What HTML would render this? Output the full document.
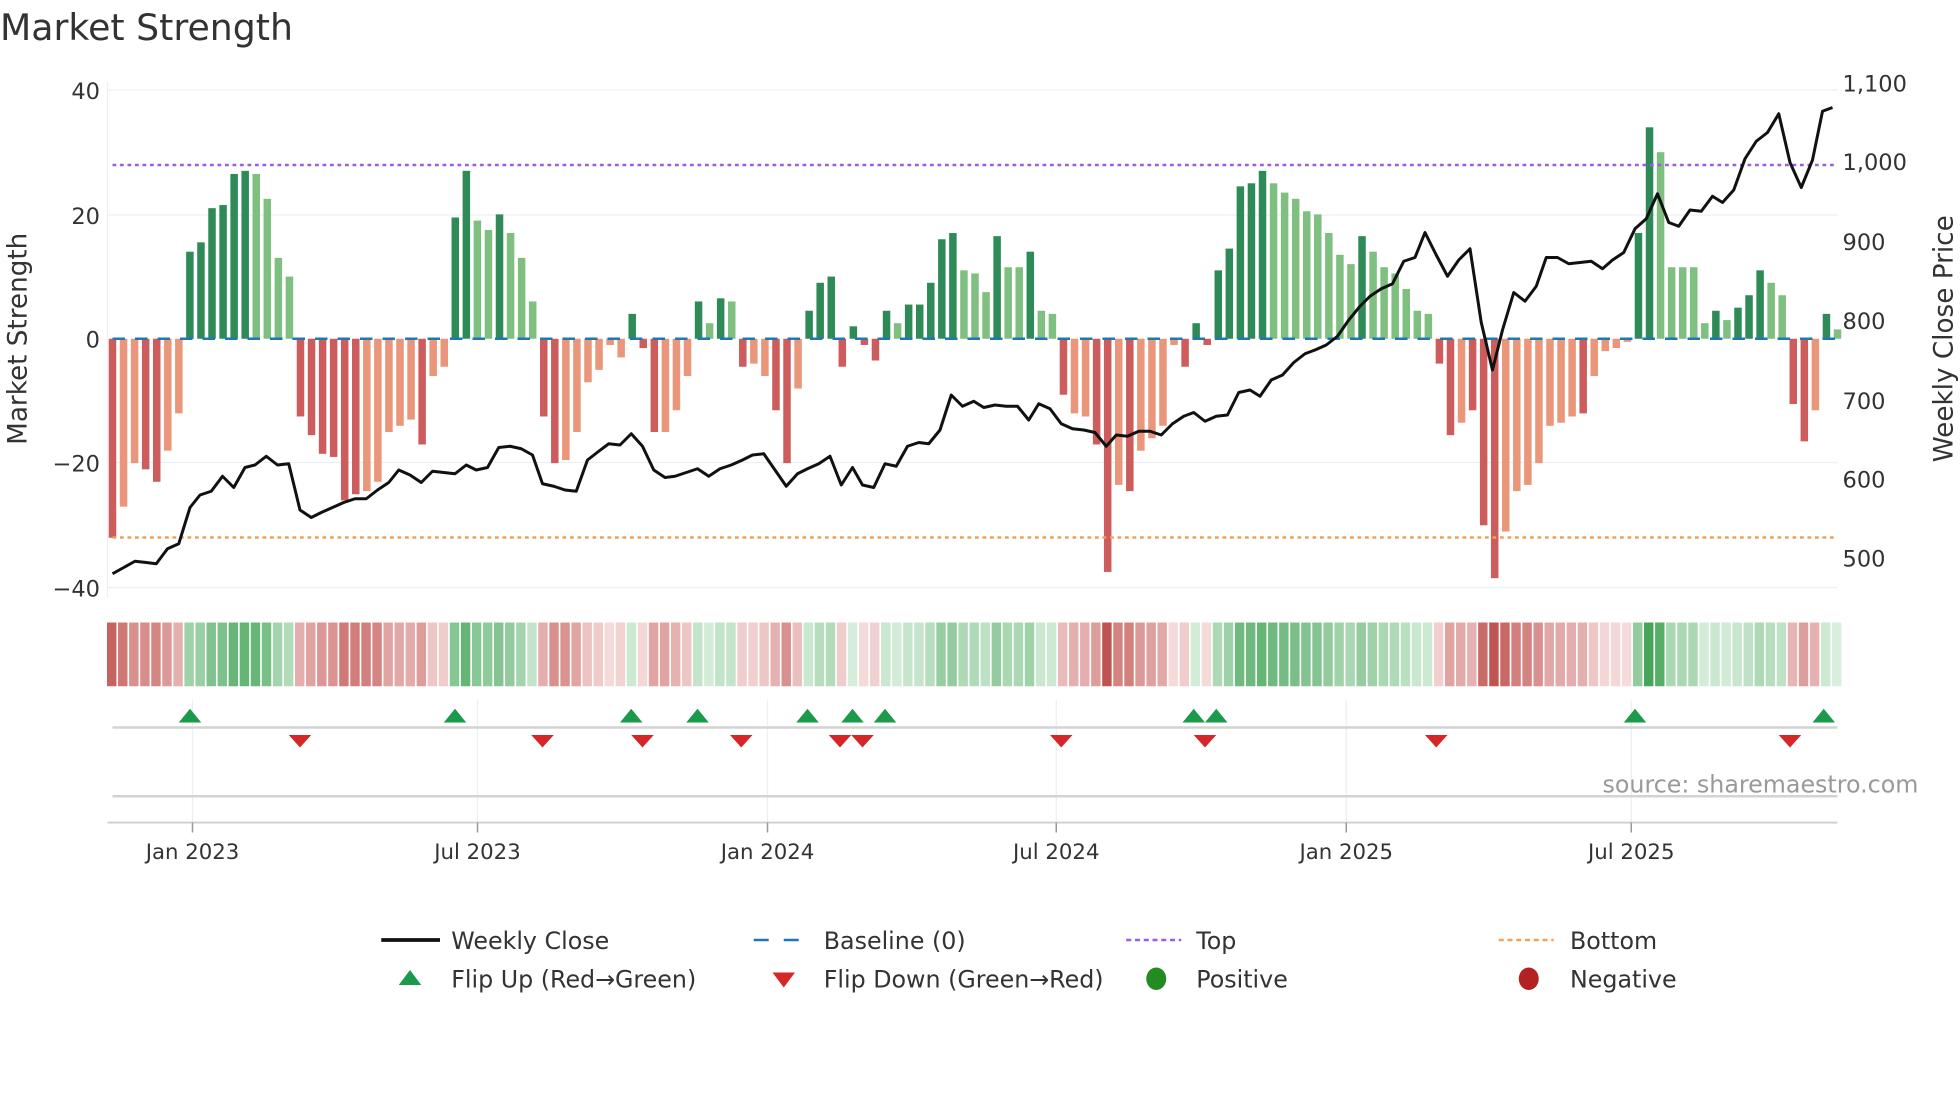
<!DOCTYPE html>
<html><head><meta charset="utf-8"><style>
html,body{margin:0;padding:0;background:#fff;}
svg{display:block;font-family:"DejaVu Sans","Liberation Sans",sans-serif;}
</style></head><body>
<svg id="s" width="1960" height="1102" viewBox="0 0 1568 881.6" xmlns="http://www.w3.org/2000/svg">
<rect width="1568" height="882" fill="#fff"/>
<text x="0" y="32" font-size="29" fill="#333">Market Strength</text>
<g stroke="#eceff3" stroke-width="1">
<line x1="86" y1="72" x2="1470" y2="72"/><line x1="86" y1="172" x2="1470" y2="172"/>
<line x1="86" y1="370" x2="1470" y2="370"/><line x1="86" y1="470" x2="1470" y2="470"/>
<line x1="86" y1="65" x2="86" y2="478"/>
<line x1="154" y1="560" x2="154" y2="658"/><line x1="382" y1="560" x2="382" y2="658"/><line x1="614" y1="560" x2="614" y2="658"/><line x1="845" y1="560" x2="845" y2="658"/><line x1="1077" y1="560" x2="1077" y2="658"/><line x1="1305" y1="560" x2="1305" y2="658"/>
</g>
<g font-size="18" fill="#333" text-anchor="end">
<text x="80" y="79">40</text><text x="80" y="179">20</text><text x="80" y="278">0</text><text x="80" y="377">−20</text><text x="80" y="477">−40</text>
</g>
<g font-size="18" fill="#333">
<text x="1474" y="73">1,100</text><text x="1474" y="136">1,000</text><text x="1474" y="200">900</text><text x="1474" y="263">800</text><text x="1474" y="327">700</text><text x="1474" y="390">600</text><text x="1474" y="453">500</text>
</g>
<text transform="translate(21,271) rotate(-90)" font-size="21" fill="#333" text-anchor="middle">Market Strength</text>
<text transform="translate(1562,271) rotate(-90)" font-size="21" fill="#333" text-anchor="middle">Weekly Close Price</text>
<g id="bars"></g>
<g id="heat"></g>
<line x1="90" y1="271" x2="1470" y2="271" stroke="#1f77b4" stroke-width="2" stroke-dasharray="10,8"/>
<line x1="90" y1="132" x2="1470" y2="132" stroke="#9b5de5" stroke-width="2" stroke-dasharray="3,3"/>
<line x1="90" y1="430" x2="1470" y2="430" stroke="#f0a058" stroke-width="2" stroke-dasharray="3,3"/>
<polyline id="price" fill="none" stroke="#111" stroke-width="2.4" stroke-linejoin="round"/>
<line x1="90" y1="582" x2="1470" y2="582" stroke="#d3d3d3" stroke-width="2"/>
<line x1="90" y1="637" x2="1470" y2="637" stroke="#d3d3d3" stroke-width="2"/>
<line x1="86" y1="658" x2="1470" y2="658" stroke="#cfcfcf" stroke-width="1.5"/>
<g stroke="#999" stroke-width="1.2">
<line x1="154" y1="658" x2="154" y2="666"/><line x1="382" y1="658" x2="382" y2="666"/><line x1="614" y1="658" x2="614" y2="666"/><line x1="845" y1="658" x2="845" y2="666"/><line x1="1077" y1="658" x2="1077" y2="666"/><line x1="1305" y1="658" x2="1305" y2="666"/>
</g>
<g id="marks"></g>
<g font-size="17" fill="#333" text-anchor="middle">
<text x="154" y="687">Jan 2023</text><text x="382" y="687">Jul 2023</text><text x="614" y="687">Jan 2024</text><text x="845" y="687">Jul 2024</text><text x="1077" y="687">Jan 2025</text><text x="1305" y="687">Jul 2025</text>
</g>
<text x="1282" y="634" font-size="19" fill="#999">source: sharemaestro.com</text>
<g font-size="19" fill="#333">
<line x1="305" y1="752" x2="352" y2="752" stroke="#111" stroke-width="3"/><text x="361" y="759">Weekly Close</text>
<line x1="603" y1="752" x2="646" y2="752" stroke="#1f77b4" stroke-width="2" stroke-dasharray="12,12"/><text x="659" y="759">Baseline (0)</text>
<line x1="901" y1="752" x2="945" y2="752" stroke="#9b5de5" stroke-width="2" stroke-dasharray="4,3"/><text x="957" y="759">Top</text>
<line x1="1199" y1="752" x2="1243" y2="752" stroke="#f0a058" stroke-width="2" stroke-dasharray="4,3"/><text x="1256" y="759">Bottom</text>
<polygon points="319,788 328,776 337,788" fill="#1a9a4a"/><text x="361" y="790">Flip Up (Red→Green)</text>
<polygon points="618,778 636,778 627,790" fill="#d62728"/><text x="659" y="790">Flip Down (Green→Red)</text>
<ellipse cx="925" cy="783" rx="8" ry="9" fill="#228b22"/><text x="957" y="790">Positive</text>
<ellipse cx="1223" cy="783" rx="8" ry="9" fill="#b22222"/><text x="1256" y="790">Negative</text>
</g>
</svg>
<script>
var D=[[-32,1],[-27,0],[-20,0],[-21,1],[-23,1],[-18,0],[-12,0],[14,1],[15.5,1],[21,1],[21.5,1],[26.5,1],[27,1],[26.5,0],[22.5,0],[13,0],[10,0],[-12.5,1],[-15.5,1],[-18.5,1],[-19,1],[-26,1],[-25,1],[-24.5,0],[-23,0],[-15,0],[-14,0],[-13,0],[-17,1],[-6,0],[-4.5,0],[19.5,1],[27,1],[19,0],[17.5,0],[20,1],[17,0],[13,0],[6,0],[-12.5,1],[-20,1],[-19.5,0],[-15,0],[-7,0],[-5,0],[-1,0],[-3,0],[4,1],[-1.5,1],[-15,1],[-15,0],[-11.5,0],[-6,0],[6,1],[2.5,0],[6.5,1],[6,0],[-4.5,1],[-4,0],[-6,0],[-11.5,1],[-20,1],[-8,0],[4.5,1],[9,1],[10,1],[-4.5,1],[2,1],[-1,1],[-3.5,1],[4.5,1],[2.5,0],[5.5,1],[5.5,1],[9,1],[16,1],[17,1],[11,0],[10.5,0],[7.5,0],[16.5,1],[11.5,0],[11.5,0],[14,1],[4.5,0],[4,0],[-9,1],[-12,0],[-12.5,0],[-17,1],[-37.5,1],[-23.5,0],[-24.5,1],[-18,0],[-16,0],[-14,0],[-1,0],[-4.5,1],[2.5,1],[-1,1],[11,1],[14.5,1],[24.5,1],[25,1],[27,1],[25,0],[23.5,0],[22.5,0],[20.5,0],[20,0],[17,0],[13.5,0],[12,0],[16.5,1],[14,0],[11.5,0],[10.5,0],[8,0],[4.5,0],[4,0],[-4,1],[-15.5,1],[-13.5,0],[-11.5,1],[-30,1],[-38.5,1],[-31,0],[-24.5,0],[-23.5,0],[-20,0],[-14,0],[-13.5,0],[-12.5,0],[-12,1],[-6,0],[-2,0],[-1.5,0],[-0.5,0],[17,1],[34,1],[30,0],[11.5,0],[11.5,0],[11.5,0],[2.5,0],[4.5,1],[3,0],[5,1],[7,1],[11,1],[9,0],[7,0],[-10.5,1],[-16.5,1],[-11.5,0],[4,1],[1.5,0]];
var NS="http://www.w3.org/2000/svg";
function el(p,t,a){var e=document.createElementNS(NS,t);for(var k in a)e.setAttribute(k,a[k]);p.appendChild(e);return e;}
function mix(a,b,t){var r=[];for(var i=0;i<3;i++)r.push(Math.round(a[i]+(b[i]-a[i])*t));return"rgb("+r.join(",")+")";}
var bars=document.getElementById("bars"),heat=document.getElementById("heat");
var step=(1470-90)/(D.length-1);
D.forEach(function(d,i){
 var v=d[0],x=90+i*step,y0=271,h=v*4.975;
 var c=v>=0?(d[1]?"#2e8b57":"#7fbf7f"):(d[1]?"#cd5c5c":"#e9967a");
 el(bars,"rect",{x:x-3,y:v>=0?y0-h:y0,width:6,height:Math.abs(h),fill:c});
 var t=Math.min(Math.abs(v)/36,1);
 var hc=v>=0?mix([222,242,226],[60,160,80],t):mix([246,222,222],[192,84,80],t);
 el(heat,"rect",{x:x-4.4,y:498,width:step-1.3,height:51,fill:hc});
});
var P=[[90,459],[99,454],[108,449],[117,450],[125,451],[134,439],[143,435],[152,406],[160,396],[169,393],[178,381],[187,390],[196,374],[204,372],[213,365],[222,372],[231,371],[240,408],[249,414],[257,410],[266,406],[275,402],[284,399],[293,399],[302,392],[311,386],[319,376],[328,380],[337,386],[346,377],[355,378],[364,379],[373,372],[381,376],[390,374],[399,358],[408,357],[417,359],[426,364],[434,387],[443,389],[452,392],[461,393],[470,368],[479,361],[487,355],[496,356],[505,347],[514,357],[523,376],[532,382],[540,381],[549,378],[558,375],[567,381],[576,375],[585,372],[594,368],[602,364],[611,363],[620,376],[629,389],[638,379],[646,375],[655,371],[664,365],[673,388],[682,374],[690,388],[699,390],[708,371],[717,373],[726,357],[735,354],[743,355],[752,344],[761,316],[770,325],[779,321],[787,326],[796,324],[805,325],[814,325],[823,336],[831,323],[840,327],[849,339],[858,343],[867,344],[876,346],[885,357],[893,348],[902,349],[911,345],[920,345],[929,348],[938,339],[947,333],[955,330],[964,337],[973,333],[982,332],[991,314],[1000,312],[1008,317],[1017,304],[1026,300],[1035,290],[1044,283],[1052,280],[1061,276],[1070,269],[1079,256],[1088,245],[1096,237],[1105,231],[1114,227],[1123,209],[1132,206],[1140,186],[1149,204],[1158,221],[1167,208],[1176,199],[1185,258],[1194,296],[1202,264],[1211,234],[1220,241],[1229,229],[1237,206],[1246,206],[1255,211],[1264,210],[1273,209],[1282,215],[1290,208],[1299,202],[1308,183],[1317,175],[1326,155],[1335,178],[1343,181],[1352,168],[1361,169],[1370,157],[1378,162],[1387,152],[1396,127],[1405,113],[1414,106],[1423,91],[1432,130],[1441,150],[1450,128],[1458,89],[1466,86]];
document.getElementById("price").setAttribute("points",P.map(function(p){return p.join(",");}).join(" "));
var m=document.getElementById("marks");
[152,364,505,558,646,682,708,955,973,1308,1459].forEach(function(x){el(m,"polygon",{points:(x-9)+",578 "+x+",567 "+(x+9)+",578",fill:"#1a9a4a"});});
[240,434,514,593,672,690,849,964,1149,1432].forEach(function(x){el(m,"polygon",{points:(x-9)+",588 "+(x+9)+",588 "+x+",598",fill:"#d62728"});});
</script>
</body></html>
